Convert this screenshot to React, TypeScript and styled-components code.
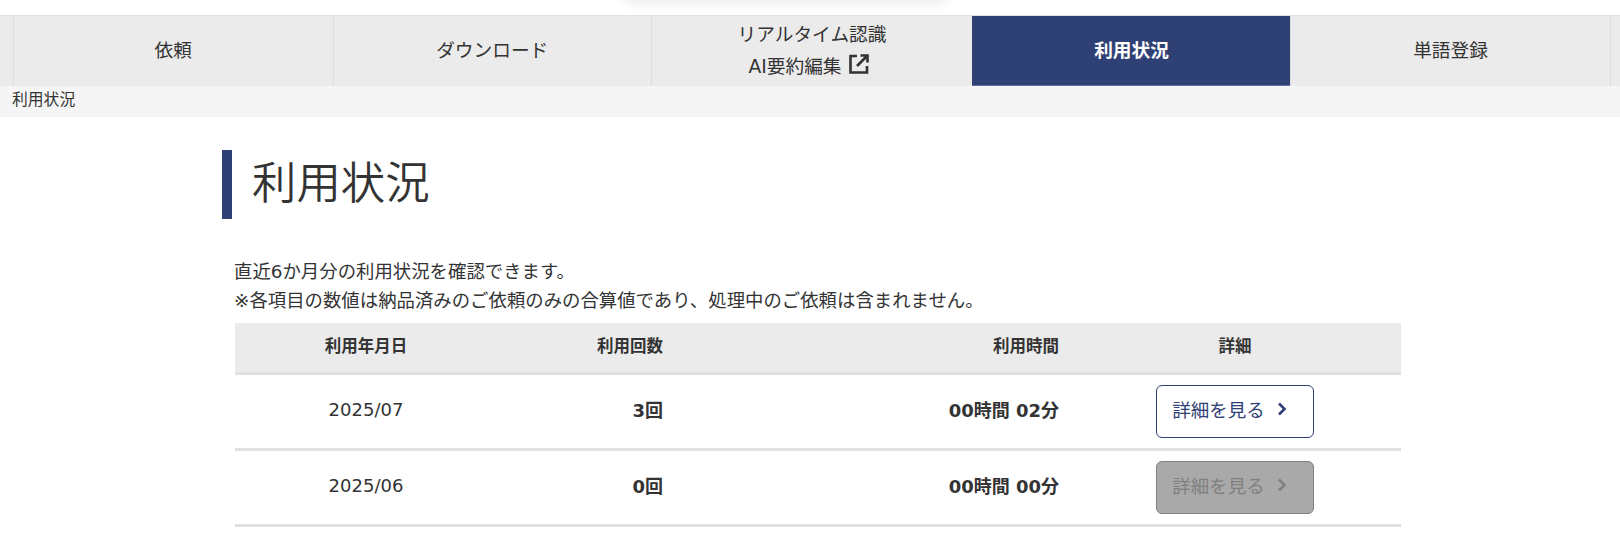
import { FC } from 'react';
import styled, { createGlobalStyle } from 'styled-components';

const NAVY = '#2f4074';
const FONT = '"DejaVu Sans", "Noto Sans CJK JP", sans-serif';

const rows = [
  { month: '2025/07', count: '3回', time: '00時間 02分', disabled: false },
  { month: '2025/06', count: '0回', time: '00時間 00分', disabled: true },
];

const ExternalIcon: FC = () => (
  <svg width="22" height="22" viewBox="0 0 22 22" fill="none" stroke="#333" strokeWidth="2.6">
    <path d="M9 3H2.5v16.5H19V13" />
    <path d="M12.5 2.5h7v7" />
    <path d="M19.5 2.5 9 13" />
  </svg>
);

const Chevron: FC = () => (
  <svg width="10" height="14" viewBox="0 0 10 14" fill="none" stroke="currentColor" strokeWidth="2.6">
    <path d="M2 1.5 7.5 7 2 12.5" />
  </svg>
);

const App: FC = () => (
  <>
    <GlobalStyle />
    <PopupShadow />
    <Nav>
      <Tab>依頼</Tab>
      <Tab>ダウンロード</Tab>
      <Tab>
        <TabLine>リアルタイム認識</TabLine>
        <TabLine $shifted>
          AI要約編集 <ExternalIcon />
        </TabLine>
      </Tab>
      <Tab $active>利用状況</Tab>
      <Tab>単語登録</Tab>
    </Nav>
    <Breadcrumb>利用状況</Breadcrumb>
    <Main>
      <Heading>利用状況</Heading>
      <Body>
        <Lead>
          直近6か月分の利用状況を確認できます。
          <br />
          ※各項目の数値は納品済みのご依頼のみの合算値であり、処理中のご依頼は含まれません。
        </Lead>
        <Table>
          <colgroup>
            <col width="262" />
            <col width="176" />
            <col width="396" />
            <col width="332" />
          </colgroup>
          <thead>
            <tr>
              <Th>利用年月日</Th>
              <Th $right>利用回数</Th>
              <Th $right>利用時間</Th>
              <Th>詳細</Th>
            </tr>
          </thead>
          <tbody>
            {rows.map((row) => (
              <tr key={row.month}>
                <Td>{row.month}</Td>
                <Td $right $bold>
                  {row.count}
                </Td>
                <Td $right $bold>
                  {row.time}
                </Td>
                <ActionCell>
                  <DetailButton $disabled={row.disabled}>
                    詳細を見る
                    <Chevron />
                  </DetailButton>
                </ActionCell>
              </tr>
            ))}
          </tbody>
        </Table>
      </Body>
    </Main>
  </>
);

const GlobalStyle = createGlobalStyle`
  html, body {
    margin: 0;
    background: #fff;
    color: #333;
    font-family: ${FONT};
    overflow: hidden;
  }
`;

const PopupShadow = styled.div`
  position: absolute;
  top: -30px;
  left: 625px;
  width: 320px;
  height: 30px;
  box-shadow: 0 0 14px rgba(0, 0, 0, 0.12);
`;

const Nav = styled.nav`
  display: grid;
  grid-template-columns: 13px 319.5px 318.5px 321px 318px 320px 1fr;
  grid-template-rows: 70px;
  height: 70px;
  margin-top: 15px;
  border-top: 1px solid #e2e2e2;
  background: #ebebeb;
  &::before,
  &::after {
    content: '';
  }
  &::after {
    border-left: 1px solid #dcdcdc;
  }
`;

const Tab = styled.div<{ $active?: boolean }>`
  box-sizing: border-box;
  display: flex;
  flex-direction: column;
  align-items: center;
  justify-content: center;
  min-height: 0;
  padding-bottom: 5px;
  font-size: 18.7px;
  color: ${(p) => (p.$active ? '#fff' : '#333')};
  font-weight: ${(p) => (p.$active ? 700 : 400)};
  background: ${(p) => (p.$active ? NAVY : 'transparent')};
  border-left: 1px solid ${(p) => (p.$active ? NAVY : '#dcdcdc')};
  border-bottom: 1px solid ${(p) => (p.$active ? '#5f70a3' : 'transparent')};
`;

const TabLine = styled.span<{ $shifted?: boolean }>`
  display: flex;
  align-items: center;
  gap: 6px;
  height: 33px;
  padding-right: ${(p) => (p.$shifted ? '6px' : '0')};
`;

const Breadcrumb = styled.div`
  height: 31px;
  line-height: 28px;
  padding-left: 12px;
  font-size: 15.8px;
  background: #f5f5f5;
`;

const Main = styled.main`
  padding: 33px 219px 0 222px;
`;

const Heading = styled.h1`
  margin: 0;
  height: 69px;
  line-height: 68px;
  padding-left: 20px;
  border-left: 10px solid ${NAVY};
  font-size: 44.4px;
  font-weight: 350;
`;

const Body = styled.div`
  padding: 38px 0 0 12px;
`;

const Lead = styled.p`
  margin: 0 0 8px;
  font-size: 18.4px;
  line-height: 29px;
`;

const Table = styled.table`
  width: 1166px;
  margin-left: 1px;
  table-layout: fixed;
  border-collapse: collapse;
`;

const Th = styled.th<{ $right?: boolean }>`
  box-sizing: border-box;
  height: 50px;
  padding: 0 ${(p) => (p.$right ? '10px' : '0')} 4px 0;
  text-align: ${(p) => (p.$right ? 'right' : 'center')};
  font-size: 16.5px;
  font-weight: 700;
  background: #ebebeb;
  border-bottom: 3px solid #e0e0e0;
`;

const Td = styled.td<{ $right?: boolean; $bold?: boolean }>`
  box-sizing: border-box;
  height: 76px;
  padding: 0 ${(p) => (p.$right ? '10px' : '0')} ${(p) => (p.$bold ? '5px' : '3px')} 0;
  text-align: ${(p) => (p.$right ? 'right' : 'center')};
  font-size: 18px;
  font-weight: ${(p) => (p.$bold ? 700 : 400)};
  border-bottom: 3px solid #e0e0e0;
`;

const ActionCell = styled(Td)`
  padding: 0;
`;

const DetailButton = styled.button<{ $disabled?: boolean }>`
  display: inline-flex;
  align-items: center;
  justify-content: center;
  gap: 12px;
  width: 158px;
  height: 53px;
  padding: 0 11px 4px 0;
  vertical-align: middle;
  font-family: ${FONT};
  font-size: 18.5px;
  border-radius: 6px;
  border: 1px solid ${(p) => (p.$disabled ? '#808080' : NAVY)};
  background: ${(p) => (p.$disabled ? '#a9a9a9' : '#fff')};
  color: ${(p) => (p.$disabled ? '#808080' : NAVY)};
`;

export default App;
